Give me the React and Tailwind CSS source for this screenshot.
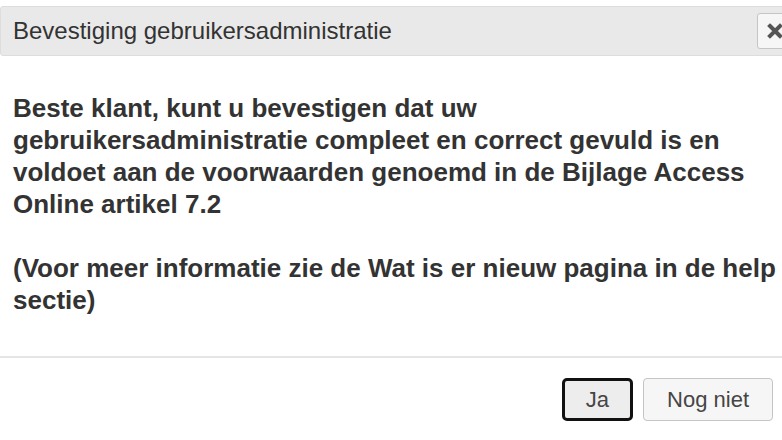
export default function App() {
  return (
    <div className="w-[782px] h-[440px] overflow-hidden bg-white text-[#333]" style={{ fontFamily: '"Liberation Sans", Arial, sans-serif' }}>
      <div className="pt-[6px] w-[810px]">
        <div className="h-[50px] flex items-center bg-[#e9e9e9] border border-[#dddddd] rounded-[3px] pl-[12px] pr-[16px]">
          <span className="text-[24px] leading-none text-[#333] flex-1 whitespace-nowrap">Bevestiging gebruikersadministratie</span>
          <div className="w-[36px] h-[36px] flex items-center justify-center bg-[#f6f6f6] border border-[#c5c5c5] rounded-[3px]">
            <svg width="16" height="16" viewBox="0 0 16 16">
              <path d="M3 3 L13 13 M13 3 L3 13" stroke="#555" strokeWidth="4" strokeLinecap="square" fill="none" />
            </svg>
          </div>
        </div>
      </div>
      <div className="pt-[36px] pb-[40px] pl-[13px] text-[26px] leading-[32px] font-bold text-[#333] whitespace-nowrap">
        <p>
          Beste klant, kunt u bevestigen dat uw<br />
          gebruikersadministratie compleet en correct gevuld is en<br />
          voldoet aan de voorwaarden genoemd in de Bijlage Access<br />
          Online artikel 7.2
        </p>
        <p className="mt-[32px]">
          (Voor meer informatie zie de Wat is er nieuw pagina in de help<br />
          sectie)
        </p>
      </div>
      <div className="border-t-2 border-[#e5e5e5] pt-[20px] flex justify-end gap-[10px] pr-[9px]">
        <button className="h-[43px] px-[21px] border-[3px] border-[#111] rounded-[5px] bg-[#ededed] text-[22px] leading-none text-[#454545]">Ja</button>
        <button className="h-[43px] px-[23px] border border-[#c5c5c5] rounded-[4px] bg-[#f6f6f6] text-[22px] leading-none text-[#454545]">Nog niet</button>
      </div>
    </div>
  );
}
